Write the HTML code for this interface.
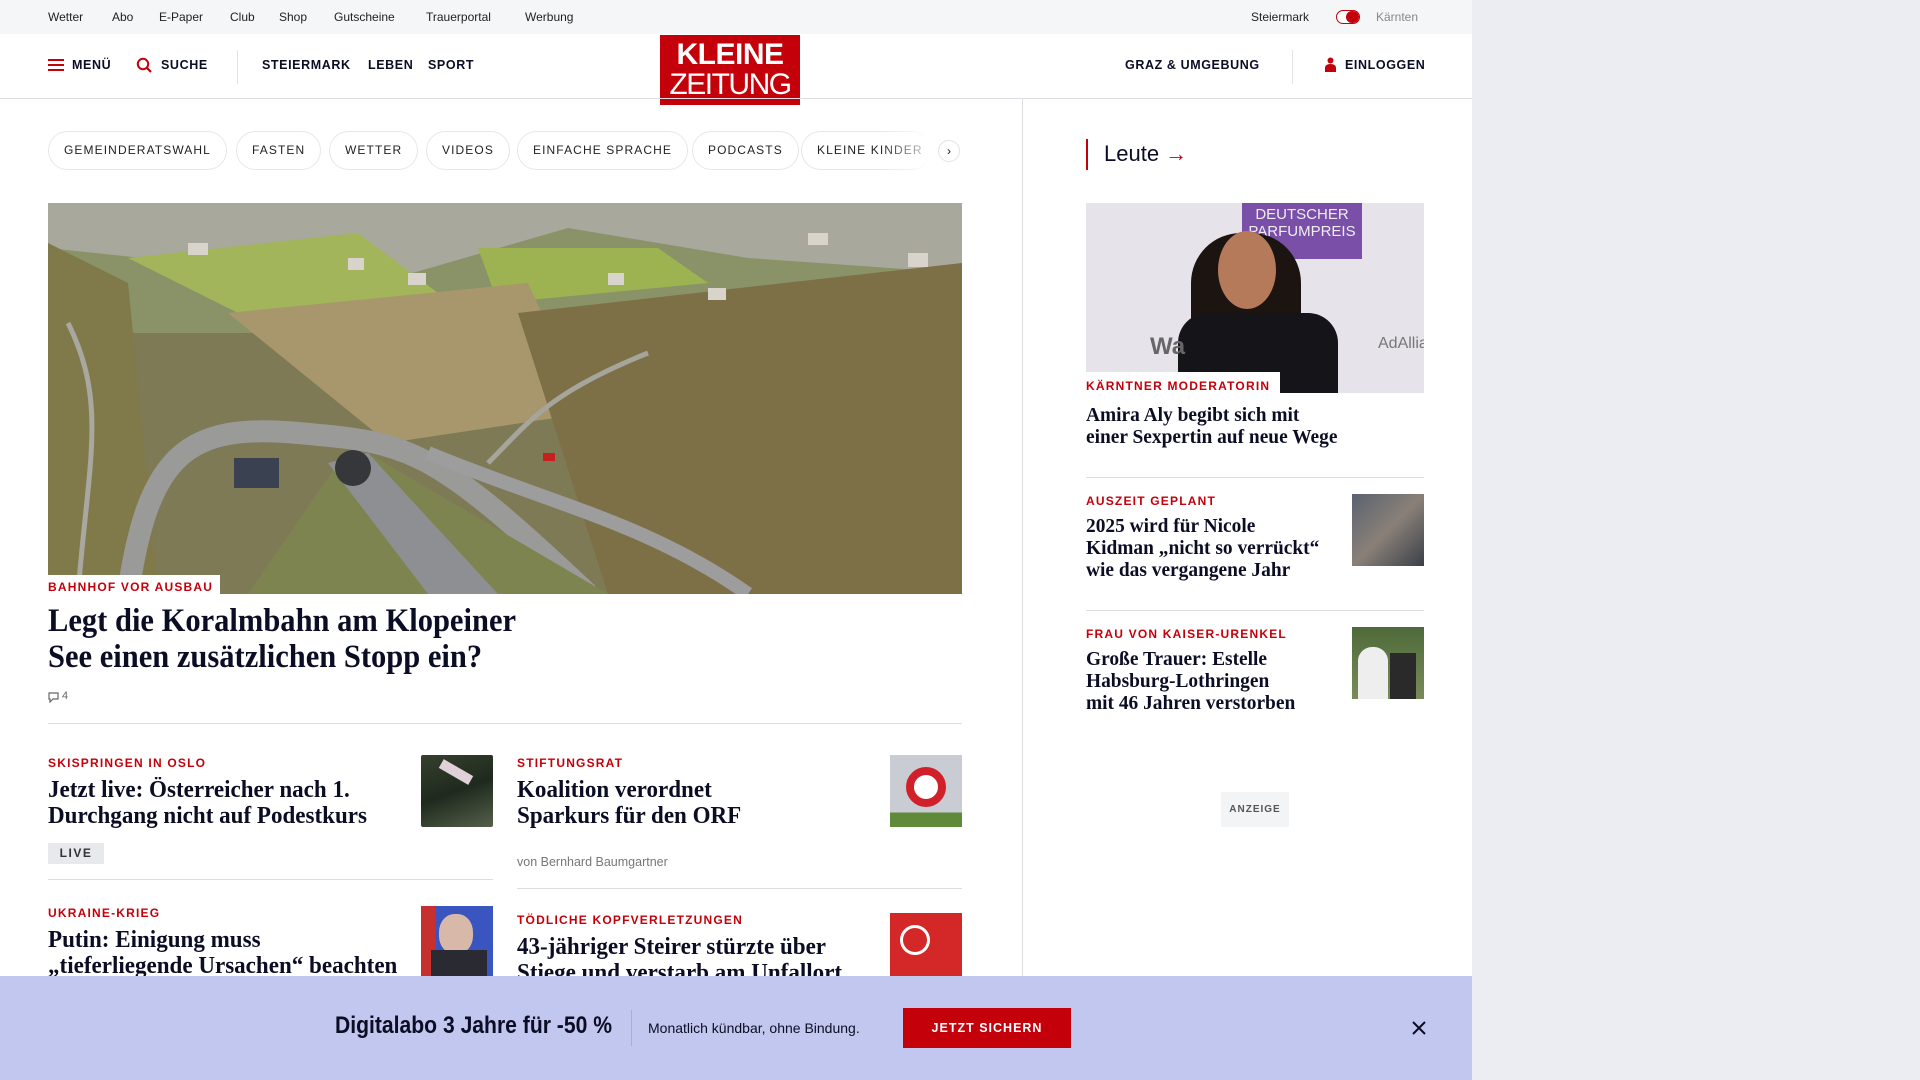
<!DOCTYPE html>
<html><head><meta charset="utf-8"><style>
*{margin:0;padding:0;box-sizing:border-box}
body{width:1920px;height:1080px;overflow:hidden;background:#ecedf2;font-family:"Liberation Sans",sans-serif;position:relative;color:#0b0d24}
.a{position:absolute}
#page{position:absolute;left:0;top:0;width:1472px;height:1080px;background:#fff}
.top{left:0;top:0;width:1472px;height:34px;background:#f5f6f8;font-size:12px;color:#222}
.top span{position:absolute;top:10px}
.nav{font-weight:bold;font-size:12.5px;letter-spacing:.6px;color:#0b0d24;top:58px}
.chip{top:131px;height:39px;border:1px solid #e6e7ea;border-radius:20px;font-size:12px;letter-spacing:1.1px;color:#222;line-height:37px;padding:0 15px;white-space:nowrap}
.kick{font-size:12px;font-weight:bold;letter-spacing:1.2px;color:#c4000a;font-family:"Liberation Sans Narrow","Liberation Sans",sans-serif}
.h{font-family:"Liberation Serif",serif;font-weight:bold;color:#0b0d24;transform-origin:left top;white-space:nowrap}
.line{height:1px;background:#dcdde0}
</style></head><body>
<div id="page">
<div class="a top">
<span style="left:48px">Wetter</span><span style="left:112px">Abo</span><span style="left:159px">E-Paper</span><span style="left:230px">Club</span><span style="left:279px">Shop</span><span style="left:334px">Gutscheine</span><span style="left:426px">Trauerportal</span><span style="left:525px">Werbung</span>
<span style="left:1251px">Steiermark</span>
<div class="a" style="left:1336px;top:10px;width:24px;height:14px;border-radius:7px;background:#fff;border:1.5px solid #c4000a;overflow:hidden"><div style="position:absolute;right:0;top:0;width:13px;height:12px;border-radius:6px;background:#c4000a"></div></div>
<span style="left:1376px;color:#888">Kärnten</span>
</div>
<div class="a" style="left:48px;top:59px;width:16px;height:12px">
<div style="height:2px;background:#c4000a;margin-bottom:3px"></div><div style="height:2px;background:#c4000a;margin-bottom:3px"></div><div style="height:2px;background:#c4000a"></div></div>
<div class="a nav" style="left:72px">MENÜ</div>
<svg class="a" style="left:136px;top:57px" width="16" height="16" viewBox="0 0 16 16"><circle cx="7" cy="7" r="5.2" fill="none" stroke="#c4000a" stroke-width="2"/><path d="M11 11l4 4" stroke="#c4000a" stroke-width="2.2"/></svg>
<div class="a nav" style="left:161px">SUCHE</div>
<div class="a" style="left:237px;top:50px;width:1px;height:34px;background:#e2e3e6"></div>
<div class="a nav" style="left:262px">STEIERMARK</div>
<div class="a nav" style="left:368px">LEBEN</div>
<div class="a nav" style="left:428px">SPORT</div>
<div class="a" style="left:660px;top:35px;width:140px;height:70px;background:#c4000a;color:#fff;text-align:center">
<div style="font-weight:bold;font-size:30px;line-height:30px;margin-top:5px;letter-spacing:-0.5px">KLEINE</div>
<div style="font-size:30px;line-height:30px;letter-spacing:-1.5px">ZEITUNG</div></div>
<div class="a nav" style="left:1125px">GRAZ &amp; UMGEBUNG</div>
<div class="a" style="left:1292px;top:50px;width:1px;height:34px;background:#e2e3e6"></div>
<svg class="a" style="left:1325px;top:57px" width="11" height="15" viewBox="0 0 11 15"><circle cx="5.5" cy="3.5" r="3" fill="#c4000a"/><path d="M0 15v-4c0-2.5 2-4 5.5-4s5.5 1.5 5.5 4v4z" fill="#c4000a"/></svg>
<div class="a nav" style="left:1345px">EINLOGGEN</div>
<div class="a line" style="left:0;top:98px;width:1472px"></div>
<div class="a" style="left:1022px;top:98px;width:1px;height:900px;background:#dcdde0"></div>
<div class="a chip" style="left:48px">GEMEINDERATSWAHL</div>
<div class="a chip" style="left:236px">FASTEN</div>
<div class="a chip" style="left:329px">WETTER</div>
<div class="a chip" style="left:426px">VIDEOS</div>
<div class="a chip" style="left:517px">EINFACHE SPRACHE</div>
<div class="a chip" style="left:692px">PODCASTS</div>
<div class="a chip" style="left:801px;width:130px;overflow:hidden;border-right:none">KLEINE KINDER</div>
<div class="a" style="left:880px;top:131px;width:60px;height:39px;background:linear-gradient(90deg,rgba(255,255,255,0),#fff)"></div>
<div class="a" style="left:938px;top:140px;width:22px;height:22px;border:1px solid #e2e3e6;border-radius:50%;font-size:12px;text-align:center;line-height:20px">›</div>
<svg class="a" style="left:48px;top:203px" width="914" height="391" viewBox="0 0 914 391">
<rect width="914" height="391" fill="#7d7a55"/>
<rect width="914" height="130" fill="#8a9268"/>
<path d="M0 0h914v70L700 55 520 25 330 80 0 45z" fill="#a9a89c"/>
<path d="M80 55l230-25 80 60-200 20z" fill="#a2b55a"/>
<path d="M430 45l180 0 50 35-210 20z" fill="#9db352"/>
<path d="M180 110l300-30 60 130-200 30z" fill="#a8966c"/>
<path d="M470 110L914 60v331H560z" fill="#7d7046"/>
<path d="M0 40l80 40 30 300H0z" fill="#807a4a"/>
<path d="M80 391C100 250 140 220 250 230S380 240 540 391" fill="none" stroke="#9a9a98" stroke-width="22"/>
<path d="M200 391L290 260 320 250 560 391z" fill="#7d8450"/>
<path d="M280 260L320 250 450 391H380z" fill="#8e8f92"/>
<circle cx="305" cy="265" r="18" fill="#35373a"/>
<path d="M380 250C500 300 600 320 700 391" fill="none" stroke="#9d9d9e" stroke-width="14"/>
<path d="M440 260C480 220 500 190 600 150" fill="none" stroke="#a6a59c" stroke-width="5"/>
<rect x="186" y="255" width="45" height="30" fill="#3a4150"/>
<rect x="495" y="250" width="12" height="8" fill="#c82020"/>
<path d="M20 120C60 200 40 260 30 391" fill="none" stroke="#a8a8a0" stroke-width="5"/>
<g fill="#d8d4cc"><rect x="140" y="40" width="20" height="12"/><rect x="300" y="55" width="16" height="12"/><rect x="360" y="70" width="18" height="12"/><rect x="560" y="70" width="16" height="12"/><rect x="660" y="85" width="18" height="12"/><rect x="760" y="30" width="20" height="12"/><rect x="860" y="50" width="20" height="14"/></g>
</svg>
<div class="a" style="left:48px;top:575px;width:172px;height:22px;background:#fff"></div>
<div class="a kick" style="left:48px;top:580px">BAHNHOF VOR AUSBAU</div>
<div class="a h" style="left:48px;top:603px;font-size:33px;line-height:36px;transform:scaleX(.925)">Legt die Koralmbahn am Klopeiner<br>See einen zusätzlichen Stopp ein?</div>
<svg class="a" style="left:48px;top:692px" width="11" height="11" viewBox="0 0 11 11"><path d="M1 1h9v6H5l-3 3V7H1z" fill="none" stroke="#666" stroke-width="1.2"/></svg>
<div class="a" style="left:62px;top:690px;font-size:11px;color:#666">4</div>
<div class="a line" style="left:48px;top:723px;width:914px"></div>
<div class="a kick" style="left:48px;top:756px">SKISPRINGEN IN OSLO</div>
<div class="a h" style="left:48px;top:777px;font-size:24px;line-height:26px;transform:scaleX(.96)">Jetzt live: Österreicher nach 1.<br>Durchgang nicht auf Podestkurs</div>
<div class="a" style="left:421px;top:755px;width:72px;height:72px;background:linear-gradient(160deg,#37402f,#1e2a1d 50%,#55604a);border-radius:2px"><div style="position:absolute;left:18px;top:12px;width:34px;height:10px;background:#e0d0d8;transform:rotate(30deg)"></div></div>
<div class="a" style="left:48px;top:843px;width:56px;height:21px;background:#e8e9ec;font-size:12px;font-weight:bold;letter-spacing:1.5px;text-align:center;line-height:21px;color:#333">LIVE</div>
<div class="a line" style="left:48px;top:879px;width:445px"></div>
<div class="a kick" style="left:48px;top:906px">UKRAINE-KRIEG</div>
<div class="a h" style="left:48px;top:927px;font-size:24px;line-height:26px;transform:scaleX(.96)">Putin: Einigung muss<br>„tieferliegende Ursachen“ beachten</div>
<div class="a" style="left:421px;top:906px;width:72px;height:72px;background:linear-gradient(90deg,#c83030 0 20%,#3a55c0 20%);"><div style="position:absolute;left:18px;top:8px;width:34px;height:40px;border-radius:45%;background:#d8b8a8"></div><div style="position:absolute;left:10px;top:44px;width:56px;height:28px;background:#2a2a32"></div></div>
<div class="a kick" style="left:517px;top:756px">STIFTUNGSRAT</div>
<div class="a h" style="left:517px;top:777px;font-size:24px;line-height:26px;transform:scaleX(.96)">Koalition verordnet<br>Sparkurs für den ORF</div>
<div class="a" style="left:890px;top:755px;width:72px;height:72px;background:linear-gradient(180deg,#c9ccd2 0 80%,#5e8a3a 80%)"><div style="position:absolute;left:16px;top:12px;width:40px;height:40px;border-radius:50%;border:8px solid #d0202a;background:#fff"></div></div>
<div class="a" style="left:517px;top:855px;font-size:12.5px;color:#777">von Bernhard Baumgartner</div>
<div class="a line" style="left:517px;top:888px;width:445px"></div>
<div class="a kick" style="left:517px;top:913px">TÖDLICHE KOPFVERLETZUNGEN</div>
<div class="a h" style="left:517px;top:934px;font-size:24px;line-height:26px;transform:scaleX(.96)">43-jähriger Steirer stürzte über<br>Stiege und verstarb am Unfallort</div>
<div class="a" style="left:890px;top:913px;width:72px;height:72px;background:#d42828"><div style="position:absolute;left:10px;top:12px;width:30px;height:30px;border-radius:50%;border:3px solid #fff"></div></div>
<div class="a" style="left:1086px;top:139px;width:2px;height:31px;background:#c4000a"></div>
<div class="a" style="left:1104px;top:141px;font-size:22px;font-family:'Liberation Sans Narrow','Liberation Sans',sans-serif">Leute <span style="color:#c4000a">→</span></div>
<div class="a" style="left:1086px;top:203px;width:338px;height:190px;background:#e6e3ea;overflow:hidden">
<div style="position:absolute;left:156px;top:0;width:120px;height:56px;background:#7a4fa8;color:#eee;font-size:15px;text-align:center;line-height:17px;padding-top:3px">DEUTSCHER<br>PARFUMPREIS</div>
<div style="position:absolute;left:105px;top:30px;width:110px;height:140px;border-radius:50px 50px 10px 10px;background:#1c1410"></div>
<div style="position:absolute;left:132px;top:28px;width:58px;height:78px;border-radius:50%;background:#b47a5a"></div>
<div style="position:absolute;left:92px;top:110px;width:160px;height:90px;border-radius:30px 30px 0 0;background:#151418"></div>
<div style="position:absolute;left:64px;top:130px;font-size:24px;color:#666;font-weight:bold">Wa</div>
<div style="position:absolute;left:292px;top:132px;font-size:16px;color:#777">AdAllia</div>
</div>
<div class="a" style="left:1086px;top:372px;width:194px;height:22px;background:#fff"></div>
<div class="a kick" style="left:1086px;top:379px">KÄRNTNER MODERATORIN</div>
<div class="a h" style="left:1086px;top:404px;font-size:20px;line-height:22px;transform:scaleX(.97)">Amira Aly begibt sich mit<br>einer Sexpertin auf neue Wege</div>
<div class="a line" style="left:1086px;top:477px;width:338px"></div>
<div class="a kick" style="left:1086px;top:494px">AUSZEIT GEPLANT</div>
<div class="a h" style="left:1086px;top:515px;font-size:20px;line-height:22px;transform:scaleX(.97)">2025 wird für Nicole<br>Kidman „nicht so verrückt“<br>wie das vergangene Jahr</div>
<div class="a" style="left:1352px;top:494px;width:72px;height:72px;background:linear-gradient(135deg,#5a6270,#8a8078 50%,#3a4048)"></div>
<div class="a line" style="left:1086px;top:610px;width:338px"></div>
<div class="a kick" style="left:1086px;top:627px">FRAU VON KAISER-URENKEL</div>
<div class="a h" style="left:1086px;top:648px;font-size:20px;line-height:22px;transform:scaleX(.97)">Große Trauer: Estelle<br>Habsburg-Lothringen<br>mit 46 Jahren verstorben</div>
<div class="a" style="left:1352px;top:627px;width:72px;height:72px;background:linear-gradient(180deg,#4e6a3a,#7a8a5a)"><div style="position:absolute;left:6px;top:20px;width:30px;height:52px;border-radius:14px 14px 0 0;background:#eee"></div><div style="position:absolute;left:38px;top:26px;width:26px;height:46px;background:#2a2a2a"></div></div>
<div class="a" style="left:1221px;top:792px;width:68px;height:35px;background:#f3f4f6;font-size:10px;font-weight:bold;letter-spacing:1px;color:#555;text-align:center;line-height:35px">ANZEIGE</div>
</div>
<div class="a" style="left:0;top:976px;width:1472px;height:104px;background:#c1c7ef">
<div class="a" style="left:335px;top:36px;font-size:24px;font-weight:bold;color:#0b0d24;transform:scaleX(.88);transform-origin:left top;white-space:nowrap">Digitalabo 3 Jahre für -50 %</div>
<div class="a" style="left:631px;top:34px;width:1px;height:36px;background:#a8aed8"></div>
<div class="a" style="left:648px;top:44px;font-size:14px;color:#0b0d24">Monatlich kündbar, ohne Bindung.</div>
<div class="a" style="left:903px;top:32px;width:168px;height:40px;background:#c4000a;color:#fff;font-size:12.5px;font-weight:bold;letter-spacing:1px;text-align:center;line-height:40px">JETZT SICHERN</div>
<svg class="a" style="left:1412px;top:45px" width="14" height="14" viewBox="0 0 14 14"><path d="M1 1l12 12M13 1L1 13" stroke="#0b0d24" stroke-width="2"/></svg>
</div>
</body></html>
